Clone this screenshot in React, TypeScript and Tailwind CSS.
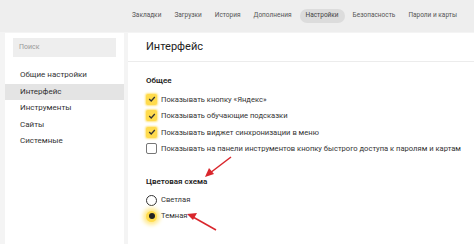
import React from 'react';

const tabs = ['Закладки', 'Загрузки', 'История', 'Дополнения', 'Настройки', 'Безопасность', 'Пароли и карты'];
const navItems = ['Общие настройки', 'Интерфейс', 'Инструменты', 'Сайты', 'Системные'];

const checks = [
  { label: 'Показывать кнопку «Яндекс»', on: true },
  { label: 'Показывать обучающие подсказки', on: true },
  { label: 'Показывать виджет синхронизации в меню', on: true },
  { label: 'Показывать на панели инструментов кнопку быстрого доступа к паролям и картам', on: false },
];

const Check = ({ on }: { on: boolean }) =>
  on ? (
    <span className="flex h-[11px] w-[11px] shrink-0 items-center justify-center rounded-[2px] bg-[#ffdb4d] shadow-[0_0_2px_1px_#ffe680]">
      <svg viewBox="0 0 10 10" className="h-[8px] w-[8px]">
        <path d="M1.5 5 L4 7.5 L8.5 2.5" fill="none" stroke="#333" strokeWidth="1.6" />
      </svg>
    </span>
  ) : (
    <span className="h-[11px] w-[11px] shrink-0 rounded-[2px] border border-[#777] bg-white" />
  );

export default function App() {
  return (
    <div className="relative h-[244px] w-[474px] overflow-hidden bg-[#f4f4f4] font-['Roboto',sans-serif] text-[#333]">
      {/* top tabs */}
      <div className="flex h-[32px] items-center gap-[3px] whitespace-nowrap bg-[#eeeeee] pl-[127px] text-[6.5px] text-[#555]">
        {tabs.map((t) => (
          <span
            key={t}
            className={`px-[5px] py-[2.5px] ${t === 'Настройки' ? 'rounded-full bg-[#dcdcdc] px-[6px] text-[#444]' : ''}`}
          >
            {t}
          </span>
        ))}
      </div>

      <div className="flex h-[212px] gap-[4px] pl-[5px] pt-[1px]">
        {/* sidebar */}
        <div className="w-[119px] shrink-0 bg-white pt-[5px]">
          <div className="mx-[8px] flex h-[19px] items-center bg-[#eeeeee] px-[6px] text-[7px] text-[#999]">Поиск</div>
          <div className="mt-[10px] flex flex-col whitespace-nowrap text-[8px]">
            {navItems.map((n) => (
              <div
                key={n}
                className={`flex h-[16.5px] items-center pl-[15px] ${n === 'Интерфейс' ? 'bg-[#e4e4e4]' : ''}`}
              >
                {n}
              </div>
            ))}
          </div>
        </div>

        {/* main */}
        <div className="min-w-0 flex-1 overflow-hidden bg-white">
          <div className="flex h-[29px] items-center border-b border-[#ececec] pl-[18px] text-[11px] text-[#222]">
            Интерфейс
          </div>
          <div className="pl-[18px] pt-[13px] text-[7.6px]">
            <div className="text-[8px] font-semibold text-[#222]">Общее</div>
            <div className="mt-[4px] flex flex-col">
              {checks.map((c) => (
                <div key={c.label} className="flex h-[16.5px] items-center gap-[4px]">
                  <Check on={c.on} />
                  <span className="whitespace-nowrap">{c.label}</span>
                </div>
              ))}
            </div>
            <div className="mt-[19px] text-[8px] font-semibold text-[#222]">Цветовая схема</div>
            <div className="mt-[4px] flex flex-col">
              <div className="flex h-[16px] items-center gap-[4px]">
                <span className="h-[11px] w-[11px] rounded-full border-[1.5px] border-[#333] bg-white" />
                <span>Светлая</span>
              </div>
              <div className="flex h-[16px] items-center gap-[4px]">
                <span className="flex h-[11px] w-[11px] items-center justify-center rounded-full bg-[#ffdb4d] shadow-[0_0_4px_3px_#ffe98a]">
                  <span className="h-[6px] w-[6px] rounded-full bg-[#222]" />
                </span>
                <span>Темная</span>
              </div>
            </div>
          </div>
        </div>
      </div>

      {/* red annotation arrows */}
      <svg className="pointer-events-none absolute left-0 top-0" width="474" height="244">
        <line x1="231" y1="157" x2="210" y2="173" stroke="#d9262c" strokeWidth="1.5" />
        <polygon points="205,177 209,168 214,174" fill="#d9262c" />
        <line x1="216" y1="230" x2="193" y2="217" stroke="#d9262c" strokeWidth="1.5" />
        <polygon points="187,214 197,213 193,220" fill="#d9262c" />
      </svg>
    </div>
  );
}
